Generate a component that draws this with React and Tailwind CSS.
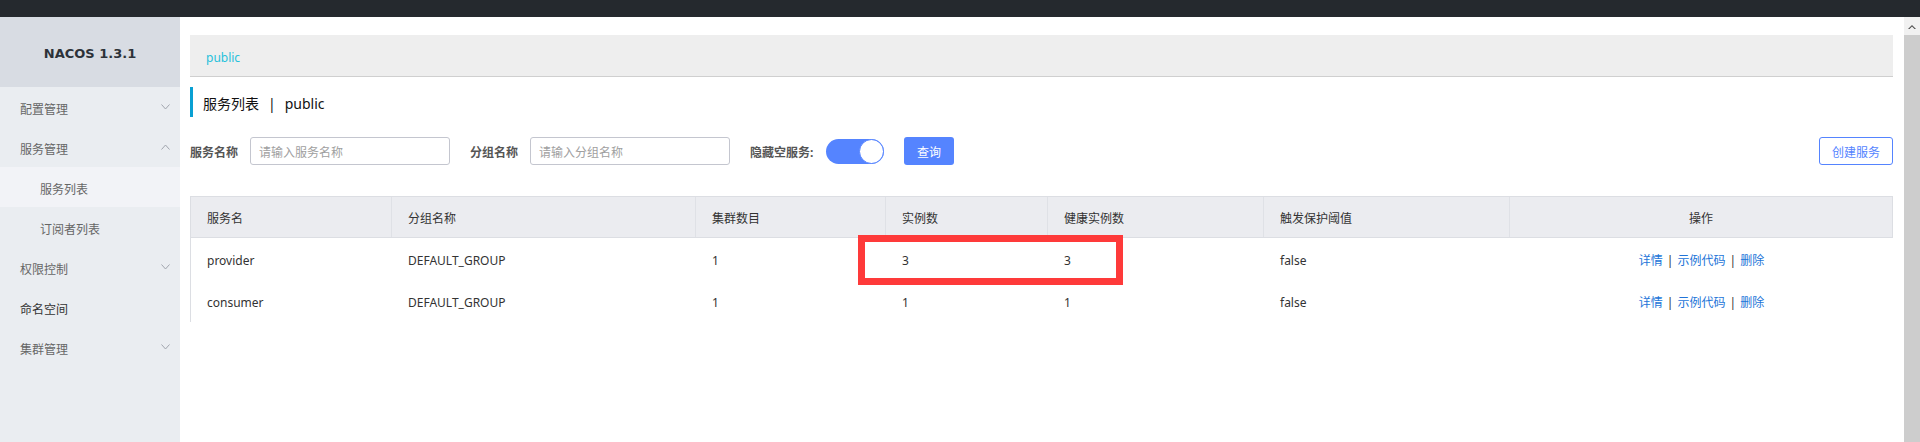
import React from "react";

const font = { fontFamily: '"Noto Sans", "Noto Sans CJK SC", sans-serif' };

const Chevron = ({ up }) => (
  <svg width="9" height="6" viewBox="0 0 9 6" className="text-[#a0a4ad]">
    <path
      d={up ? "M0.5 5.5 L4.5 1 L8.5 5.5" : "M0.5 0.5 L4.5 5 L8.5 0.5"}
      fill="none"
      stroke="currentColor"
      strokeWidth="1"
    />
  </svg>
);

const menu = [
  { label: "配置管理", chevron: "down" },
  { label: "服务管理", chevron: "up" },
  { label: "服务列表", sub: true, active: true },
  { label: "订阅者列表", sub: true },
  { label: "权限控制", chevron: "down" },
  { label: "命名空间", dark: true },
  { label: "集群管理", chevron: "down" },
];

const cols = [
  { title: "服务名", w: "w-[201px]" },
  { title: "分组名称", w: "w-[304px]" },
  { title: "集群数目", w: "w-[190px]" },
  { title: "实例数", w: "w-[162px]" },
  { title: "健康实例数", w: "w-[216px]" },
  { title: "触发保护阈值", w: "w-[246px]" },
  { title: "操作", w: "flex-1", center: true },
];

const rows = [
  ["provider", "DEFAULT_GROUP", "1", "3", "3", "false"],
  ["consumer", "DEFAULT_GROUP", "1", "1", "1", "false"],
];

const Sidebar = () => (
  <div className="w-[180px] shrink-0 bg-[#eaedf1] flex flex-col">
    <div className="h-[70px] bg-[#d8dce3] flex items-center justify-center pt-[3px]">
      <span
        className="text-[13px] font-bold text-[#2d3239]"
        style={{ fontFamily: '"DejaVu Sans", sans-serif' }}
      >
        NACOS 1.3.1
      </span>
    </div>
    {menu.map((m) => (
      <div
        key={m.label}
        className={`h-[40px] flex items-center justify-between pr-[10px] text-[12px] ${
          m.sub ? "pl-[40px]" : "pl-[20px]"
        } ${m.active ? "bg-[#f2f3f7]" : ""} ${m.dark ? "text-[#333]" : "text-[#666]"}`}
      >
        <span className="pt-[5px]">{m.label}</span>
        {m.chevron && <Chevron up={m.chevron === "up"} />}
      </div>
    ))}
  </div>
);

const Table = () => (
  <div className="relative mt-[31px]">
    <div className="flex h-[42px] bg-[#ebecf0] border border-[#dcdee3] text-[12px] text-[#333]">
      {cols.map((c, i) => (
        <div
          key={c.title}
          className={`${c.w} flex items-center pt-[3px] ${c.center ? "justify-center" : "pl-[16px]"} ${
            i < cols.length - 1 ? "border-r border-[#dfe1e6]" : ""
          }`}
        >
          {c.title}
        </div>
      ))}
    </div>
    <div className="border-l border-[#dcdee3]">
      {rows.map((r) => (
        <div key={r[0]} className="flex h-[42px] text-[12px] text-[#333] pt-[3px]">
          {r.map((v, i) => (
            <div key={i} className={`${cols[i].w} flex items-center pl-[16px]`}>
              {v}
            </div>
          ))}
          <div className="flex-1 flex items-center justify-center gap-[4px] text-[#2274d8]">
            <span>详情</span>
            <span className="text-[#333]">|</span>
            <span>示例代码</span>
            <span className="text-[#333]">|</span>
            <span>删除</span>
          </div>
        </div>
      ))}
    </div>
    {/* highlight box */}
    <div className="absolute left-[668px] top-[39px] w-[265px] h-[50px] border-[7px] border-[#fe3a3a]" />
  </div>
);

const Main = () => (
  <div className="flex-1 pt-[18px] pl-[10px] pr-[11px]">
    {/* breadcrumb */}
    <div className="h-[42px] bg-[#eeeeee] border-b border-[#cfcfcf] flex items-center pl-[16px]">
      <span className="text-[12px] text-[#26c1db] mt-[4px]">public</span>
    </div>

    {/* title */}
    <div className="mt-[10px] h-[30px] border-l-[3px] border-[#09a0d3] flex items-center pl-[10px] pt-[3px] text-[14px] text-[#111]">
      <span>服务列表</span>
      <span className="mx-[9px]">|</span>
      <span>public</span>
    </div>

    {/* filters */}
    <div className="mt-[20px] flex items-center h-[28px] text-[12px]">
      <span className="w-[60px] font-bold text-[#555] pt-[3px]">服务名称</span>
      <input
        className="w-[200px] h-[28px] border border-[#c4c6cf] rounded-[3px] px-[8px] pt-[2px] outline-none placeholder:text-[#a0a0a0]"
        placeholder="请输入服务名称"
      />
      <span className="ml-[20px] w-[60px] font-bold text-[#555] pt-[3px]">分组名称</span>
      <input
        className="w-[200px] h-[28px] border border-[#c4c6cf] rounded-[3px] px-[8px] pt-[2px] outline-none placeholder:text-[#a0a0a0]"
        placeholder="请输入分组名称"
      />
      <span className="ml-[20px] w-[76px] font-bold text-[#555] pt-[3px]">隐藏空服务:</span>
      <div className="w-[58px] h-[25px] rounded-full bg-[#5584ff] flex justify-end">
        <div className="w-[25px] h-[25px] rounded-full bg-white border border-[#5584ff]" />
      </div>
      <button className="ml-[20px] w-[50px] h-[28px] rounded-[3px] bg-[#5584ff] text-white text-[12px] pt-[3px]">
        查询
      </button>
      <button className="ml-auto w-[74px] h-[28px] rounded-[3px] border border-[#5584ff] text-[#5584ff] text-[12px] bg-white pt-[3px]">
        创建服务
      </button>
    </div>

    <Table />
  </div>
);

const Scrollbar = () => (
  <div className="w-[16px] shrink-0 flex flex-col">
    <div className="h-[18px] bg-[#f1f1f1] flex items-center justify-center">
      <svg width="8" height="5" viewBox="0 0 8 5">
        <path d="M0 5 L4 1 L8 5 L6.5 5 L4 2.5 L1.5 5 Z" fill="#505050" />
      </svg>
    </div>
    <div className="flex-1 bg-[#cdcdcd]" />
  </div>
);

export default function App() {
  return (
    <div className="w-[1920px] h-[442px] flex flex-col bg-white overflow-hidden" style={font}>
      <div className="h-[17px] bg-[#25292e] shrink-0" />
      <div className="flex-1 flex">
        <Sidebar />
        <Main />
        <Scrollbar />
      </div>
    </div>
  );
}
